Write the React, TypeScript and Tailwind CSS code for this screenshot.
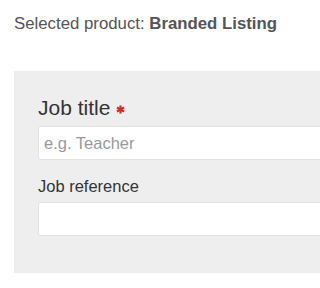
export default function App() {
  return (
    <div
      className="w-full min-h-[288px] bg-white pl-[14px] pt-[12px] overflow-hidden"
      style={{ fontFamily: '"Liberation Sans", Arial, sans-serif' }}
    >
      <p className="text-[16.8px] leading-[24px] text-[#555] whitespace-nowrap">
        Selected product: <span className="font-bold">Branded Listing</span>
      </p>

      <div className="mt-[35px] mr-[-30px] bg-[#eeeeee] pl-[24px] pt-[23px] pb-[37px]">
        <label className="flex items-center text-[21px] leading-[28px] text-[#333]">
          Job title
          <svg width="9" height="9" viewBox="0 0 10 10" className="ml-[6px] mt-[2px]">
            <g stroke="#d42a1f" strokeWidth="2.4" strokeLinecap="butt">
              <line x1="5" y1="0.5" x2="5" y2="9.5" />
              <line x1="1.1" y1="2.75" x2="8.9" y2="7.25" />
              <line x1="1.1" y1="7.25" x2="8.9" y2="2.75" />
            </g>
          </svg>
        </label>
        <input
          type="text"
          placeholder="e.g. Teacher"
          className="mt-[4px] block h-[34px] w-full rounded-[3px] border border-[#e2e2e2] bg-white px-[5px] text-[16.5px] text-[#333] placeholder:text-[#9a9a9a] outline-none"
        />

        <label className="mt-[14px] block text-[16.5px] leading-[24px] text-[#333]">
          Job reference
        </label>
        <input
          type="text"
          className="mt-[4px] block h-[34px] w-full rounded-[3px] border border-[#e2e2e2] bg-white px-[5px] text-[16.5px] text-[#333] outline-none"
        />
      </div>
    </div>
  );
}
